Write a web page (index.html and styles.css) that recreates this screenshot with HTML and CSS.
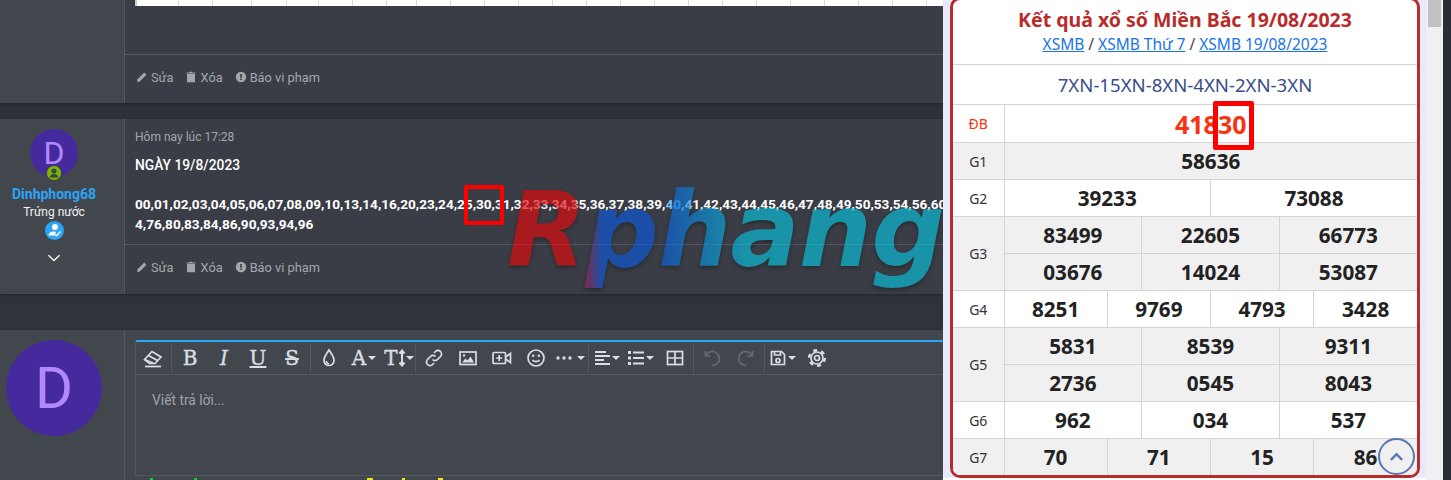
FILE: index.html
```html
<!DOCTYPE html>
<html lang="vi">
<head>
<meta charset="UTF-8" />
<title>Kết quả xổ số Miền Bắc 19/08/2023</title>
<link rel="stylesheet" href="styles.css">
</head>
<body>

<div class="forum">
  <!-- end of the previous post -->
  <div class="post post-first">
    <div class="post-side"></div>
    <div class="post-main">
      <div class="old-table">
        <span></span><span></span><span></span><span></span><span></span><span></span><span></span><span></span><span></span>
        <span></span><span></span><span></span><span></span><span></span><span></span><span></span><span></span><span></span>
        <span></span><span></span><span></span><span></span><span></span><span></span>
      </div>
      <div class="post-fill"></div>
      <div class="actions">
        <a><svg viewBox="0 0 12 12"><path d="M1 11l.6-2.8L8.2 1.6l2.2 2.2-6.6 6.6z"/></svg>Sửa</a>
        <a><svg viewBox="0 0 12 12"><path d="M2 3h8v8.2H2zM1.6 1.4h3l.5-.6h1.8l.5.6h3v1H1.6z"/></svg>Xóa</a>
        <a><svg viewBox="0 0 12 12"><path fill-rule="evenodd" d="M6 .8a5.2 5.2 0 1 1 0 10.4A5.2 5.2 0 0 1 6 .8zM5.2 3v3.8h1.6V3zm0 4.6v1.5h1.6V7.6z"/></svg>Báo vi phạm</a>
      </div>
    </div>
  </div>

  <div class="post post-second">
    <div class="post-side">
      <div class="avatar-wrap">
        <div class="avatar">D</div>
        <span class="online">
          <svg viewBox="0 0 14 14"><circle cx="7" cy="5" r="2.6"/><path d="M2.8 11.4c.4-2.6 2.2-3.4 4.2-3.4s3.8.8 4.2 3.4z"/></svg>
        </span>
      </div>
      <div class="username">Dinhphong68</div>
      <div class="usertitle">Trứng nước</div>
      <span class="rank-badge">
        <svg viewBox="0 0 19 19"><circle cx="10" cy="6" r="3"/><path d="M3.5 14.5c.3-3 2.500-4 5-4 1 0 2 .2 2.800.6l-2.300 3.400z"/><path class="check" d="M9.800 13.500l1.700 1.300 4-4.300"/></svg>
      </span>
      <svg class="chevron" viewBox="0 0 14 8"><path d="M1.500 1.200L7 6.500l5.500-5.300"/></svg>
    </div>
    <div class="post-main">
      <div class="post-body">
        <div class="post-time">Hôm nay lúc 17:28</div>
        <p class="post-day">NGÀY 19/8/2023</p>
        <p class="post-numbers">00,01,02,03,04,05,06,07,08,09,10,13,14,16,20,23,24,25,30,31,32,33,34,35,36,37,38,39,<span class="num-blue">40</span>,41,42,43,44,45,46,47,48,49,50,53,54,56,60,<br>4,76,80,83,84,86,90,93,94,96</p>
      </div>
      <div class="actions">
        <a><svg viewBox="0 0 12 12"><path d="M1 11l.6-2.8L8.200 1.600l2.200 2.200-6.600 6.600z"/></svg>Sửa</a>
        <a><svg viewBox="0 0 12 12"><path d="M2 3h8v8.200H2zM1.600 1.400h3l.5-.6h1.800l.5.6h3v1H1.600z"/></svg>Xóa</a>
        <a><svg viewBox="0 0 12 12"><path fill-rule="evenodd" d="M6 .8a5.200 5.200 0 1 1 0 10.400A5.200 5.200 0 0 1 6 .8zM5.200 3v3.800h1.600V3zm0 4.600v1.500h1.600V7.600z"/></svg>Báo vi phạm</a>
      </div>
    </div>
  </div>

  <!-- reply box -->
  <div class="post post-reply">
    <div class="post-side">
      <div class="avatar avatar-big">D</div>
    </div>
    <div class="post-main reply-main">
      <div class="editor">
        <div class="toolbar">
          <div class="tb-group">
            <button class="tb-btn"><svg class="eraser" viewBox="0 0 20 20"><path d="M1.500 11.500l7.500-8 9 5.500-6 6.500H6.500z"/><path d="M1.500 11.500l9 3.800M5.500 7.500l9 5"/><path d="M2 18.500h16"/></svg></button>
          </div>
          <div class="tb-group">
            <button class="tb-btn tb-letter">B</button>
            <button class="tb-btn tb-letter tb-italic">I</button>
            <button class="tb-btn tb-letter tb-under">U</button>
            <button class="tb-btn tb-letter tb-strike">S</button>
          </div>
          <div class="tb-group">
            <button class="tb-btn"><svg viewBox="0 0 20 20"><path d="M10 2c2.500 4 5 6.500 5 10.500a5 5 0 0 1-10 0C5 8.500 7.500 6 10 2z"/><path d="M7.500 13a2.500 2.500 0 0 0 2.500 2.800"/></svg></button>
            <button class="tb-btn tb-letter tb-wide tb-color">A<i class="caret"></i></button>
            <button class="tb-btn tb-letter tb-wide tb-size">T<svg class="updown" viewBox="0 0 8 18"><path d="M4 1.500v15M1.500 4.500L4 1.500l2.500 3M1.500 13.500L4 16.500l2.500-3"/></svg><i class="caret"></i></button>
          </div>
          <div class="tb-group">
            <button class="tb-btn"><svg viewBox="0 0 20 20"><path d="M8.500 11.500a3.500 3.500 0 0 0 5 0l3-3a3.500 3.500 0 0 0-5-5l-1.500 1.500"/><path d="M11.500 8.500a3.500 3.500 0 0 0-5 0l-3 3a3.500 3.500 0 0 0 5 5l1.500-1.500"/></svg></button>
            <button class="tb-btn"><svg viewBox="0 0 20 20"><rect x="2" y="4" width="16" height="12.500"/><path class="solid" d="M4 14.500l3.500-4 2 2 3-4 3.500 6z"/><circle class="solid" cx="6" cy="7.500" r="1.200"/></svg></button>
            <button class="tb-btn"><svg viewBox="0 0 20 20"><rect x="1" y="4.500" width="12.500" height="11" rx="1"/><path d="M7.200 7v6M4.200 10h6"/><path d="M13.500 9l5-3.500v9l-5-3.500"/></svg></button>
            <button class="tb-btn"><svg viewBox="0 0 20 20"><circle cx="10" cy="10" r="8"/><path d="M6.500 12c1.800 2.200 5.200 2.200 7 0"/><circle class="solid" cx="7.200" cy="7.800" r="1.200"/><circle class="solid" cx="12.800" cy="7.800" r="1.200"/></svg></button>
            <button class="tb-btn tb-wide"><svg class="dots" viewBox="0 0 16 4"><circle cx="2" cy="2" r="1.700"/><circle cx="8" cy="2" r="1.700"/><circle cx="14" cy="2" r="1.700"/></svg><i class="caret"></i></button>
          </div>
          <div class="tb-group">
            <button class="tb-btn tb-wide"><svg class="lines" viewBox="0 0 16 16"><path d="M1 2h11M1 6h15M1 10h9M1 14h15"/></svg><i class="caret"></i></button>
            <button class="tb-btn tb-wide"><svg class="lines" viewBox="0 0 16 16"><path d="M5 2.500h11M5 8h11M5 13.500h11"/><path class="fat" d="M0 2.500h3M0 8h3M0 13.500h3"/></svg><i class="caret"></i></button>
            <button class="tb-btn"><svg viewBox="0 0 20 20"><rect x="2.500" y="3.500" width="15" height="13"/><path d="M10 3.500v13M2.500 10h15"/></svg></button>
          </div>
          <div class="tb-group">
            <button class="tb-btn tb-off"><svg viewBox="0 0 20 20"><path d="M3.500 3v5h5"/><path d="M3.800 8A7 7 0 1 1 10 17.500"/></svg></button>
            <button class="tb-btn tb-off"><svg viewBox="0 0 20 20"><path d="M16.500 3v5h-5"/><path d="M16.200 8A7 7 0 1 0 10 17.500"/></svg></button>
          </div>
          <div class="tb-group tb-last">
            <button class="tb-btn tb-wide"><svg class="save" viewBox="0 0 16 16"><path d="M1.500 1.500h10l3 3v10h-13z"/><path d="M4.500 1.500v3.500h6V1.500"/><circle cx="8" cy="10.500" r="2"/></svg><i class="caret"></i></button>
            <button class="tb-btn"><svg viewBox="0 0 20 20"><circle class="teeth" cx="10" cy="10" r="7.800"/><circle cx="10" cy="10" r="6"/><circle cx="10" cy="10" r="2.500"/></svg></button>
          </div>
        </div>
        <div class="editor-area">Viết trả lời...</div>
      </div>
      <div class="note-marks"><span></span><span></span><span></span><span></span><span></span></div>
    </div>
  </div>

  <!-- things lying over the posts -->
  <div class="watermark">Rphang</div>
  <div class="mark mark-post"></div>
</div>

<div class="panel">
  <div class="card">
    <div class="card-head">
      <h2>Kết quả xổ số Miền Bắc 19/08/2023</h2>
      <div class="crumbs"><a>XSMB</a> / <a>XSMB Thứ 7</a> / <a>XSMB 19/08/2023</a></div>
    </div>
    <div class="method">7XN-15XN-8XN-4XN-2XN-3XN</div>
    <table class="results">
      <colgroup>
        <col class="col-label">
        <col><col><col><col><col><col><col><col><col><col><col><col>
      </colgroup>
      <tr class="row-db"><th>ĐB</th><td colspan="12">41830</td></tr>
      <tr class="row-alt"><th>G1</th><td colspan="12">58636</td></tr>
      <tr><th>G2</th><td colspan="6">39233</td><td colspan="6">73088</td></tr>
      <tr class="row-alt"><th rowspan="2">G3</th><td colspan="4">83499</td><td colspan="4">22605</td><td colspan="4">66773</td></tr>
      <tr class="row-alt"><td colspan="4">03676</td><td colspan="4">14024</td><td colspan="4">53087</td></tr>
      <tr><th>G4</th><td colspan="3">8251</td><td colspan="3">9769</td><td colspan="3">4793</td><td colspan="3">3428</td></tr>
      <tr class="row-alt"><th rowspan="2">G5</th><td colspan="4">5831</td><td colspan="4">8539</td><td colspan="4">9311</td></tr>
      <tr class="row-alt"><td colspan="4">2736</td><td colspan="4">0545</td><td colspan="4">8043</td></tr>
      <tr><th>G6</th><td colspan="4">962</td><td colspan="4">034</td><td colspan="4">537</td></tr>
      <tr class="row-alt"><th>G7</th><td colspan="3">70</td><td colspan="3">71</td><td colspan="3">15</td><td colspan="3">86</td></tr>
    </table>
    <div class="mark mark-card"></div>
    <button class="to-top"><svg viewBox="0 0 16 10"><path d="M2 8l6-6 6 6"/></svg></button>
  </div>
</div>

<div class="scrollbar"><div class="thumb"></div></div>
<div class="edge"></div>

</body>
</html>
```

FILE: styles.css
```css
html, body {
  margin: 0;
  height: 480px;
  overflow: hidden;
}
body {
  display: flex;
  background: #2a2f36;
  font-family: Roboto, "Liberation Sans", sans-serif;
}

/* Forum column */
.forum {
  flex: 0 0 943px;
  height: 480px;
  overflow: hidden;
  position: relative;
  background: linear-gradient(#2c3038, #30343c);
}
.post {
  display: flex;
  width: 1400px;
  background: #3a3d45;
  box-shadow: 0 1px 3px rgba(0,0,0,0.3);
}
.post-first {
  height: 103px;
  margin-bottom: 16px;
}
.post-second {
  height: 175px;
  margin-bottom: 36px;
}
.post-reply {
  height: 150px;
  background: #42474e;
}
.post-side {
  flex: 0 0 125px;
  box-sizing: border-box;
  padding-right: 16px;
  background: #42474e;
  border-right: 1px solid #55595f;
  display: flex;
  flex-direction: column;
  align-items: center;
}
.post-main {
  flex: 1;
  display: flex;
  flex-direction: column;
  min-width: 0;
}
.post-fill {
  flex: 1;
}

.old-table {
  display: flex;
  height: 6px;
  margin-left: 10px;
  background: #fff;
  border-left: 2px solid #ccc;
}
.old-table span {
  flex: 0 0 34px;
  border-right: 1px solid #ddd;
  box-sizing: border-box;
}
.old-table span:nth-child(1) {
  flex-basis: 42px;
}
.old-table span:nth-child(3) {
  flex-basis: 39px;
}
.old-table span:nth-child(4) {
  flex-basis: 35px;
}
.old-table span:nth-child(5) {
  flex-basis: 32px;
}
.old-table span:nth-child(8) {
  flex-basis: 30px;
}

.actions {
  height: 49px;
  box-sizing: border-box;
  border-top: 1px solid #55595f;
  padding: 0 0 4px 11px;
  display: flex;
  align-items: center;
  gap: 12px;
  font-size: 12.8px;
  color: #a3a7ad;
}
.post-second .actions {
  height: 50px;
  padding-bottom: 5px;
}
.actions a {
  display: flex;
  align-items: center;
  gap: 3px;
}
.actions svg {
  width: 12px;
  height: 12px;
  fill: #a3a7ad;
}

/* Post author */
.avatar-wrap {
  position: relative;
  margin-top: 10px;
}
.avatar {
  width: 48px;
  height: 48px;
  border-radius: 50%;
  background: #452a9e;
  color: #b388ff;
  font-size: 32px;
  line-height: 48px;
  text-align: center;
}
.avatar-big {
  width: 96px;
  height: 96px;
  margin-top: 10px;
  font-size: 58px;
  line-height: 96px;
}
.online {
  position: absolute;
  left: 16px;
  top: 36px;
  width: 16px;
  height: 16px;
  box-sizing: border-box;
  border: 1px solid #3f4349;
  border-radius: 50%;
  background: #7ab800;
}
.online svg {
  display: block;
  width: 14px;
  height: 14px;
  fill: #3f4349;
}
.username {
  margin-top: 8px;
  font-size: 14px;
  font-weight: 700;
  line-height: 18px;
  color: #2ba5f7;
}
.usertitle {
  margin-top: 1px;
  font-size: 12px;
  line-height: 17px;
  color: #f2f2f2;
}
.rank-badge {
  width: 19px;
  height: 19px;
  border-radius: 50%;
  background: #2ba5f7;
}
.rank-badge svg {
  display: block;
  width: 19px;
  height: 19px;
  fill: #fff;
}
.rank-badge .check {
  fill: none;
  stroke: #fff;
  stroke-width: 1.5;
}
.chevron {
  width: 14px;
  height: 8px;
  margin-top: 14px;
  fill: none;
  stroke: #f2f2f2;
  stroke-width: 1.5;
}

/* Post text */
.post-body {
  flex: 1;
  padding: 10px 10px 0;
  color: #fff;
}
.post-time {
  margin-top: 1px;
  font-size: 12px;
  line-height: 15px;
  color: #a3a7ad;
}
.post-day {
  margin: 10px 0 0;
  font-size: 13.8px;
  font-weight: 500;
  line-height: 20px;
}
.post-numbers {
  margin: 19px 0 0;
  font-size: 13.6px;
  font-weight: 700;
  line-height: 20px;
  white-space: nowrap;
}
.num-blue {
  color: #7cc4ff;
}

/* Reply editor */
.reply-main {
  padding: 10px 0 0 10px;
}
.editor {
  border: 1px solid #55595f;
  border-top: 2px solid #2ba5f7;
  border-radius: 3px 0 0 0;
  height: 133px;
  display: flex;
  flex-direction: column;
}
.toolbar {
  display: flex;
  height: 32px;
  flex: none;
  align-items: center;
  border-bottom: 1px solid #55595f;
}
.tb-group {
  display: flex;
  height: 30px;
  padding: 0 1px 0 0;
  border-right: 1px solid #55595f;
}
.tb-group + .tb-group {
  padding-left: 1px;
}
.tb-last {
  border-right: none;
}
.tb-btn {
  width: 34px;
  height: 30px;
  padding: 0;
  border: none;
  background: none;
  display: flex;
  align-items: center;
  justify-content: center;
  color: #d9dee4;
  font-family: "DejaVu Serif", serif;
  font-size: 20px;
  font-weight: 400;
  -webkit-text-stroke: 0.4px #d9dee4;
}
.tb-btn svg {
  width: 20px;
  height: 20px;
  fill: none;
  stroke: #d9dee4;
  stroke-width: 1.7;
}
.tb-btn svg .solid {
  fill: #d9dee4;
  stroke: none;
}
.tb-btn .teeth {
  stroke-width: 2.5;
  stroke-dasharray: 3.9 4.27;
}
.tb-off svg {
  stroke: #666a71;
}
.tb-italic {
  font-style: italic;
}
.tb-under {
  text-decoration: underline;
}
.tb-strike {
  text-decoration: line-through;
}
.tb-wide {
  gap: 2px;
}
.tb-color {
  padding-left: 2px;
}
.tb-size {
  gap: 0;
  padding-left: 4px;
}
.tb-btn .updown {
  width: 8px;
  height: 18px;
  stroke-width: 2;
}
.tb-btn .dots {
  width: 16px;
  height: 4px;
  fill: #d9dee4;
  stroke: none;
  margin-right: 3px;
}
.tb-btn .lines,
.tb-btn .save {
  width: 16px;
  height: 16px;
}
.tb-btn .lines {
  stroke-width: 2;
}
.tb-btn .fat {
  stroke-width: 3;
}
.caret {
  width: 0;
  height: 0;
  border-left: 4px solid transparent;
  border-right: 4px solid transparent;
  border-top: 4px solid #d9dee4;
}
.editor-area {
  flex: 1;
  padding: 16px 16px 0;
  font-size: 13.8px;
  line-height: 19px;
  color: #9ea2a8;
}

/* tops of the coloured notice line under the editor */
.note-marks {
  display: flex;
  margin-top: 2px;
  height: 2px;
}
.note-marks span {
  width: 3px;
  margin-left: 15px;
  background: #19d219;
}
.note-marks span:nth-child(2) {
  margin-left: 41px;
}
.note-marks span:nth-child(3) {
  margin-left: 170px;
  width: 6px;
  background: #f0e614;
}
.note-marks span:nth-child(4) {
  margin-left: 29px;
  background: #f0e614;
}
.note-marks span:nth-child(5) {
  margin-left: 33px;
  width: 5px;
  background: #f0e614;
}

/* Overlays */
.watermark {
  position: absolute;
  left: 507px;
  top: 170px;
  font-family: "DejaVu Sans", sans-serif;
  font-size: 103px;
  font-weight: 700;
  font-style: italic;
  line-height: 120px;
  letter-spacing: -1px;
  white-space: nowrap;
  opacity: 0.67;
  color: transparent;
  background: linear-gradient(90deg, #de090c 0, #de090c 70px, #0d58d8 95px, #0d58d8 150px, #0abed8 240px, #0abed8 100%);
  -webkit-background-clip: text;
  background-clip: text;
  filter: drop-shadow(0 2px 2px rgba(0,0,0,0.5));
}
.mark {
  position: absolute;
  box-sizing: border-box;
  border: 4px solid #f00;
  border-radius: 2px;
}
.mark-post {
  left: 464px;
  top: 185px;
  width: 40px;
  height: 40px;
}

/* Result panel */
.panel {
  flex: 0 0 483px;
  height: 480px;
  box-sizing: border-box;
  padding: 0 6px 0 7px;
  background: #e6eafb;
  border-bottom: 2px solid #fff;
  color: #222;
  font-family: "Noto Sans", "Open Sans", sans-serif;
}
.card {
  position: relative;
  margin-top: -3px;
  height: 481px;
  box-sizing: border-box;
  border: 3px solid #b72c2a;
  border-radius: 10px;
  background: #fff;
  overflow: hidden;
}
.card-head {
  height: 65px;
  box-sizing: border-box;
  padding-top: 6px;
  border-bottom: 1px solid #d4d4d4;
  text-align: center;
}
.card-head h2 {
  margin: 0;
  font-size: 19.5px;
  font-weight: 700;
  line-height: 28px;
  color: #b72c2a;
}
.crumbs {
  font-size: 15.5px;
  line-height: 20px;
  color: #444;
}
.crumbs a {
  color: #1a73e8;
  text-decoration: underline;
}
.method {
  height: 39px;
  line-height: 39px;
  text-align: center;
  font-size: 18.6px;
  color: #3a4c8c;
}
.results {
  width: 100%;
  table-layout: fixed;
  border-collapse: collapse;
}
.col-label {
  width: 51px;
}
.results tr {
  height: 37px;
}
.results .row-db {
  height: 38px;
}
.results th,
.results td {
  padding: 0;
  border: 1px solid #d4d4d4;
  text-align: center;
}
.results th:first-child {
  border-left: none;
}
.results td:last-child {
  border-right: none;
}
.results th {
  font-size: 14px;
  font-weight: 400;
  color: #333;
}
.results td {
  font-size: 20.7px;
  font-weight: 700;
  line-height: 24px;
  color: #222;
}
.row-alt {
  background: #f0f0f0;
}
.row-db th {
  color: #f9320f;
}
.results .row-db td {
  font-size: 25px;
  color: #f9320f;
}
.mark-card {
  left: 260px;
  top: 101px;
  width: 41px;
  height: 49px;
  border-width: 5px;
}
.to-top {
  position: absolute;
  right: 2px;
  bottom: 0;
  width: 37px;
  height: 37px;
  padding: 0;
  border: 2px solid #5a77b5;
  border-radius: 50%;
  background: transparent;
  display: flex;
  align-items: center;
  justify-content: center;
}
.to-top svg {
  width: 15px;
  height: 10px;
  fill: none;
  stroke: #5a77b5;
  stroke-width: 2.5;
}

.scrollbar {
  flex: 0 0 17px;
  background: #f0f0f0;
}
.thumb {
  width: 13px;
  height: 27px;
  margin-left: 2px;
  background: #c1c1c1;
}
.edge {
  flex: 1;
}
```
